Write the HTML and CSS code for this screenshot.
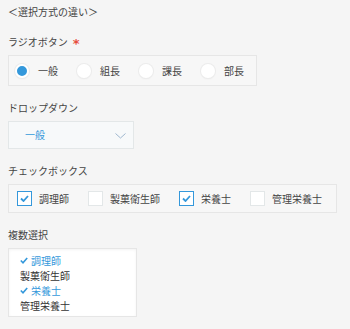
FILE: index.html
```html
<!DOCTYPE html>
<html lang="ja">
<head>
  <meta charset="UTF-8">
  <title>選択方式の違い</title>
  <link rel="stylesheet" href="styles.css">
</head>
<body>
  <div class="title">＜選択方式の違い＞</div>

  <div class="field">
    <div class="label">ラジオボタン<span class="req">*</span></div>
    <div class="radio-box">
      <div class="radio-item"><span class="radio checked"></span>一般</div>
      <div class="radio-item"><span class="radio"></span>組長</div>
      <div class="radio-item"><span class="radio"></span>課長</div>
      <div class="radio-item"><span class="radio"></span>部長</div>
    </div>
  </div>

  <div class="field">
    <div class="label">ドロップダウン</div>
    <div class="dropdown">
      <span class="dropdown-value">一般</span>
      <svg class="chevron" width="11" height="6" viewBox="0 0 11 6">
        <path d="M0.5 0.5 L5.5 5 L10.5 0.5" fill="none" stroke="#9fb7cf" stroke-width="1"/>
      </svg>
    </div>
  </div>

  <div class="field">
    <div class="label">チェックボックス</div>
    <div class="check-box">
      <div class="check-item"><span class="cb checked"><svg width="9" height="7" viewBox="0 0 9 7"><path d="M1 3.5 L3.5 6 L8 1" fill="none" stroke="#3498db" stroke-width="1.8"/></svg></span>調理師</div>
      <div class="check-item"><span class="cb"></span>製菓衛生師</div>
      <div class="check-item"><span class="cb checked"><svg width="9" height="7" viewBox="0 0 9 7"><path d="M1 3.5 L3.5 6 L8 1" fill="none" stroke="#3498db" stroke-width="1.8"/></svg></span>栄養士</div>
      <div class="check-item"><span class="cb"></span>管理栄養士</div>
    </div>
  </div>

  <div class="field">
    <div class="label">複数選択</div>
    <div class="multi">
      <div class="multi-item selected"><svg width="8" height="7" viewBox="0 0 8 7"><path d="M0.8 3.5 L3 5.8 L7.2 1" fill="none" stroke="#3498db" stroke-width="1.6"/></svg>調理師</div>
      <div class="multi-item">製菓衛生師</div>
      <div class="multi-item selected"><svg width="8" height="7" viewBox="0 0 8 7"><path d="M0.8 3.5 L3 5.8 L7.2 1" fill="none" stroke="#3498db" stroke-width="1.6"/></svg>栄養士</div>
      <div class="multi-item">管理栄養士</div>
    </div>
  </div>
</body>
</html>
```

FILE: styles.css
```css
body {
  margin: 0;
  padding: 4px 8px;
  background: #f5f5f5;
  color: #333;
  font-family: "Noto Sans CJK JP", "Noto Sans", sans-serif;
  font-size: 10px;
  line-height: 16px;
}
.title {
  height: 16px;
  color: #444;
}
.field {
  margin-top: 14px;
}
.label {
  display: flex;
  align-items: center;
  height: 16px;
  margin-bottom: 5px;
  color: #444;
}
.req {
  color: #e74c3c;
  margin-left: 5px;
  font-family: "DejaVu Sans", sans-serif;
  font-size: 13px;
  font-weight: bold;
  line-height: 16px;
  padding-top: 3px;
}
.radio-box {
  display: inline-flex;
  align-items: center;
  height: 29px;
  padding: 0 12px 0 6px;
  border: 1px solid #e6e6e6;
  background: #f7f7f7;
}
.radio-item {
  display: flex;
  align-items: center;
  margin-right: 19px;
  color: #444;
}
.radio-item:last-child {
  margin-right: 0;
}
.radio {
  width: 14px;
  height: 14px;
  border-radius: 50%;
  background: #fff;
  box-shadow: 0 0 0 1px #ececec, 0 1px 2px rgba(0,0,0,0.06);
  margin-right: 9px;
  box-sizing: border-box;
}
.radio.checked {
  background: #3498db;
  border: 2px solid #fff;
}
.dropdown {
  display: flex;
  align-items: center;
  justify-content: space-between;
  width: 126px;
  height: 28px;
  box-sizing: border-box;
  padding: 0 7px 0 16px;
  border: 1px solid #e3e7e8;
  background: #f7f9fa;
  color: #3498db;
}
.chevron {
  margin-top: 1px;
}
.check-box {
  display: inline-flex;
  align-items: center;
  height: 27px;
  padding: 0 14px 0 8px;
  border: 1px solid #e6e6e6;
  background: #f7f7f7;
}
.check-item {
  display: flex;
  align-items: center;
  margin-right: 19px;
  color: #444;
}
.check-item:last-child {
  margin-right: 0;
}
.cb {
  display: flex;
  align-items: center;
  justify-content: center;
  width: 15px;
  height: 15px;
  box-sizing: border-box;
  border: 1px solid #e3e7e8;
  background: #fff;
  margin-right: 7px;
}
.cb.checked {
  border: 1.5px solid #3498db;
}
.multi {
  width: 129px;
  box-sizing: border-box;
  padding: 3.5px 11px;
  border: 1px solid #e6e6e6;
  background: #fff;
  box-shadow: inset 0 1px 3px rgba(0,0,0,0.05);
}
.multi-item {
  display: flex;
  align-items: center;
  height: 15px;
  line-height: 15px;
}
.multi-item.selected {
  color: #3498db;
}
.multi-item svg {
  margin-right: 3px;
}
```
